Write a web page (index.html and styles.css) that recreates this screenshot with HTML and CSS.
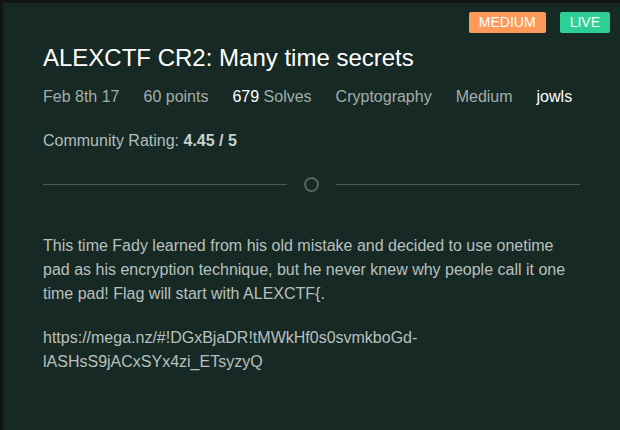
FILE: index.html
```html
<!DOCTYPE html>
<html>
<head>
<meta charset="utf-8">
<link rel="stylesheet" href="styles.css">
</head>
<body>
<div class="frame">
  <div class="card">
    <div class="badges">
      <span class="badge badge-medium">MEDIUM</span>
      <span class="badge badge-live">LIVE</span>
    </div>
    <h1 class="title">ALEXCTF CR2: Many time secrets</h1>
    <div class="meta">
      <span>Feb 8th 17</span>
      <span>60 points</span>
      <span><b class="hl">679</b> Solves</span>
      <span>Cryptography</span>
      <span>Medium</span>
      <span class="hl">jowls</span>
    </div>
    <p class="rating">Community Rating: <b>4.45 / 5</b></p>
    <div class="divider">
      <span class="line"></span>
      <span class="dot"></span>
      <span class="line"></span>
    </div>
    <div class="desc">
      <p>This time Fady learned from his old mistake and decided to use onetime pad as his encryption technique, but he never knew why people call it one time pad! Flag will start with ALEXCTF{.</p>
      <p>https://mega.nz/#!DGxBjaDR!tMWkHf0s0svmkboGd-<br>lASHsS9jACxSYx4zi_ETsyzyQ</p>
    </div>
  </div>
</div>
</body>
</html>
```
FILE: styles.css
```css
html, body {
  margin: 0;
  padding: 0;
  background: #111514;
  font-family: "Liberation Sans", Arial, sans-serif;
}
.frame {
  padding: 3px 0 0 3px;
  height: 427px;
  overflow: hidden;
}
.card {
  background: #172925;
  height: 100%;
  padding: 0 40px 0 40px;
  position: relative;
  box-sizing: border-box;
}
.badges {
  position: absolute;
  top: 9px;
  right: 10px;
  display: flex;
  gap: 14px;
}
.badge {
  display: inline-block;
  height: 21px;
  line-height: 21px;
  padding: 0 10px;
  font-size: 14px;
  color: #ffffff;
  border-radius: 2px;
}
.badge-medium { background: #fd9a5a; }
.badge-live { background: #2ecf94; }
.title {
  margin: 0;
  padding-top: 41px;
  font-size: 24px;
  font-weight: normal;
  color: #ffffff;
  line-height: 28px;
}
.meta {
  display: flex;
  gap: 24px;
  margin-top: 15px;
  font-size: 16px;
  color: #a3aeab;
  line-height: 20px;
}
.meta .hl { color: #ffffff; font-weight: normal; }
.rating {
  margin: 24px 0 0 0;
  font-size: 16px;
  color: #b3bdba;
  line-height: 20px;
}
.rating b { color: #c9d1ce; }
.divider {
  display: flex;
  align-items: center;
  gap: 17px;
  margin-top: 25px;
  height: 16px;
}
.line {
  flex: 1;
  height: 1px;
  background: #4c5d58;
}
.dot {
  width: 11px;
  height: 11px;
  border: 2px solid #55655f;
  border-radius: 50%;
}
.desc {
  margin-top: 42px;
  font-size: 16px;
  line-height: 24px;
  color: #b7c0bd;
}
.desc p { margin: 0 0 20px 0; }
```
